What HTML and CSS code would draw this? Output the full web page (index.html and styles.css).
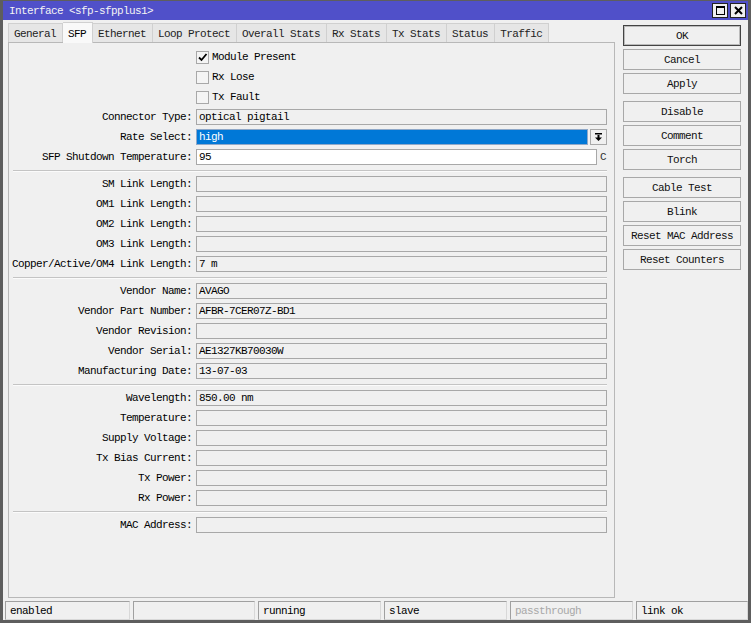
FILE: index.html
```html
<!DOCTYPE html>
<html>
<head>
<meta charset="utf-8">
<link rel="stylesheet" href="styles.css">
</head>
<body>
<div class="window">
  <div class="titlebar">
    <span class="title">Interface &lt;sfp-sfpplus1&gt;</span>
    <div class="tb-btns">
      <span class="tb-btn"><svg width="13" height="13" viewBox="0 0 13 13"><rect x="2.5" y="2.5" width="8" height="8" fill="none" stroke="#000" stroke-width="1"/><rect x="2" y="2" width="9" height="2" fill="#000"/></svg></span>
      <span class="tb-btn"><svg width="13" height="13" viewBox="0 0 13 13"><path d="M3 3 L10 10 M10 3 L3 10" stroke="#000" stroke-width="2"/></svg></span>
    </div>
  </div>
  <div class="main">
    <div class="left">
      <div class="tabs">
        <span class="tab">General</span>
        <span class="tab active">SFP</span>
        <span class="tab">Ethernet</span>
        <span class="tab">Loop Protect</span>
        <span class="tab">Overall Stats</span>
        <span class="tab">Rx Stats</span>
        <span class="tab">Tx Stats</span>
        <span class="tab">Status</span>
        <span class="tab">Traffic</span>
      </div>
      <div class="panel">
        <div class="row"><span class="label"></span><span class="check checked"><svg width="11" height="11" viewBox="0 0 11 11"><path d="M2 5.5 L4.5 8 L9.5 2" fill="none" stroke="#000" stroke-width="1.8"/></svg></span><span class="ctext">Module Present</span></div>
        <div class="row"><span class="label"></span><span class="check"></span><span class="ctext">Rx Lose</span></div>
        <div class="row"><span class="label"></span><span class="check"></span><span class="ctext">Tx Fault</span></div>
        <div class="row"><span class="label">Connector Type:</span><span class="field">optical pigtail</span></div>
        <div class="row"><span class="label">Rate Select:</span><span class="field selected">high</span><span class="dd"><svg width="9" height="10" viewBox="0 0 9 10"><rect x="1" y="1" width="7" height="1.5" fill="#000"/><rect x="3.5" y="3" width="2" height="3" fill="#000"/><path d="M1 5.5 H8 L4.5 9 Z" fill="#000"/></svg></span></div>
        <div class="row"><span class="label">SFP Shutdown Temperature:</span><span class="field white">95</span><span class="unit">C</span></div>
        <div class="sep"></div>
        <div class="row"><span class="label">SM Link Length:</span><span class="field"></span></div>
        <div class="row"><span class="label">OM1 Link Length:</span><span class="field"></span></div>
        <div class="row"><span class="label">OM2 Link Length:</span><span class="field"></span></div>
        <div class="row"><span class="label">OM3 Link Length:</span><span class="field"></span></div>
        <div class="row"><span class="label">Copper/Active/OM4 Link Length:</span><span class="field">7 m</span></div>
        <div class="sep"></div>
        <div class="row"><span class="label">Vendor Name:</span><span class="field">AVAGO</span></div>
        <div class="row"><span class="label">Vendor Part Number:</span><span class="field">AFBR-7CER07Z-BD1</span></div>
        <div class="row"><span class="label">Vendor Revision:</span><span class="field"></span></div>
        <div class="row"><span class="label">Vendor Serial:</span><span class="field">AE1327KB70030W</span></div>
        <div class="row"><span class="label">Manufacturing Date:</span><span class="field">13-07-03</span></div>
        <div class="sep"></div>
        <div class="row"><span class="label">Wavelength:</span><span class="field">850.00 nm</span></div>
        <div class="row"><span class="label">Temperature:</span><span class="field"></span></div>
        <div class="row"><span class="label">Supply Voltage:</span><span class="field"></span></div>
        <div class="row"><span class="label">Tx Bias Current:</span><span class="field"></span></div>
        <div class="row"><span class="label">Tx Power:</span><span class="field"></span></div>
        <div class="row"><span class="label">Rx Power:</span><span class="field"></span></div>
        <div class="sep"></div>
        <div class="row"><span class="label">MAC Address:</span><span class="field"></span></div>
      </div>
    </div>
    <div class="right">
      <span class="btn default">OK</span>
      <span class="btn">Cancel</span>
      <span class="btn">Apply</span>
      <span class="btn group">Disable</span>
      <span class="btn">Comment</span>
      <span class="btn">Torch</span>
      <span class="btn group">Cable Test</span>
      <span class="btn">Blink</span>
      <span class="btn">Reset MAC Address</span>
      <span class="btn">Reset Counters</span>
    </div>
  </div>
  <div class="statusbar">
    <span class="sfield">enabled</span>
    <span class="sfield"></span>
    <span class="sfield">running</span>
    <span class="sfield">slave</span>
    <span class="sfield dim">passthrough</span>
    <span class="sfield">link ok</span>
  </div>
</div>
</body>
</html>
```
FILE: styles.css
```css
* { box-sizing: border-box; }
html, body { margin: 0; padding: 0; background: #f0f0f0; }
body {
  font-family: "Liberation Mono", "DejaVu Sans Mono", monospace;
  font-size: 11px;
  letter-spacing: -0.6px;
  color: #000;
}
.window {
  width: 751px;
  height: 623px;
  border: 3px solid #5e5e5e;
  border-top: 1px solid #5e5e5e;
  background: #f0f0f0;
  display: flex;
  flex-direction: column;
}
.titlebar {
  height: 19px;
  background: #5050c9;
  display: flex;
  align-items: center;
  justify-content: space-between;
  padding: 0 2px 0 6px;
}
.title { color: #f4f4f4; }
.tb-btns { display: flex; gap: 2px; }
.tb-btn {
  width: 16px;
  height: 15px;
  border: 1px solid #222;
  background: #f0f0f0;
  display: flex;
  align-items: center;
  justify-content: center;
}
.main {
  height: 580px;
  display: flex;
  padding: 3px 7px 2px 5px;
  gap: 8px;
}
.left {
  width: 607px;
  display: flex;
  flex-direction: column;
}
.tabs {
  height: 19px;
  display: flex;
  align-items: flex-end;
}
.tab {
  height: 19px;
  padding: 1px 6px 0 5px;
  background: #e6e6e6;
  border: 1px solid #d0d0d0;
  border-left: none;
  border-bottom: none;
  color: #222;
  display: flex;
  align-items: center;
  white-space: pre;
}
.tab:first-child { border-left: 1px solid #d0d0d0; }
.tab.active {
  height: 21px;
  margin-bottom: -1px;
  background: #f9f9f9;
  position: relative;
  z-index: 1;
  color: #000;
}
.panel {
  flex: 1;
  border: 1px solid #b8b8b8;
  background: #f0f0f0;
  padding: 4px 7px 0 0;
  display: flex;
  flex-direction: column;
}
.row {
  height: 20px;
  display: flex;
  align-items: center;
}
.label {
  width: 183px;
  flex: none;
  text-align: right;
  margin-right: 4px;
  white-space: pre;
}
.field {
  flex: 1;
  height: 16px;
  border: 1px solid #a8a8a8;
  background: #f0f0f0;
  padding-left: 2px;
  display: flex;
  align-items: center;
  white-space: pre;
  color: #000;
}
.field.white { background: #ffffff; }
.field.selected {
  background: #0078d7;
  color: #fff;
  border-color: #8fa8c8;
}
.dd {
  width: 17px;
  height: 16px;
  margin-left: 2px;
  border: 1px solid #a8a8a8;
  background: #f0f0f0;
  display: flex;
  align-items: center;
  justify-content: center;
}
.unit {
  width: 10px;
  padding-left: 3px;
  color: #333;
}
.check {
  width: 13px;
  height: 13px;
  border: 1px solid #a8a8a8;
  background: #f4f4f4;
  display: flex;
  align-items: center;
  justify-content: center;
  margin-right: 3px;
}
.ctext { white-space: pre; }
.sep {
  height: 1px;
  margin: 3px 0 3px 4px;
  background: #c4c4c4;
  box-shadow: 0 1px 0 #fbfbfb;
}
.right {
  width: 118px;
  display: flex;
  flex-direction: column;
  padding-top: 2px;
}
.btn {
  height: 21px;
  flex: none;
  margin-bottom: 3px;
  border: 1px solid #a8a8a8;
  background: #f0f0f0;
  display: flex;
  align-items: center;
  justify-content: center;
  white-space: pre;
  color: #111;
}
.btn.default { border: 1px solid #444; box-shadow: inset 0 0 0 1px #bbb; }
.btn.group { margin-top: 4px; }
.statusbar {
  height: 20px;
  display: grid;
  grid-template-columns: 125px 122px 123px 123px 123px 1fr;
  gap: 3px;
  padding: 1px 0 0 2px;
}
.sfield {
  height: 19px;
  border: 1px solid #a0a0a0;
  border-right-color: #d8d8d8;
  border-bottom-color: #d8d8d8;
  padding-left: 4px;
  display: flex;
  align-items: center;
  white-space: pre;
  color: #000;
}
.sfield.dim { color: #a8a8a8; }
```
